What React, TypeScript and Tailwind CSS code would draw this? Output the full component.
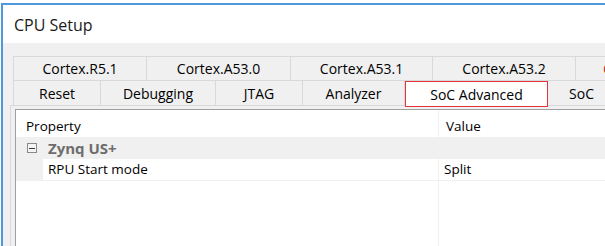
import React from 'react';

const font = { fontFamily: '"Open Sans", "Segoe UI", sans-serif' };

type Tab = { label: string; w: number; active?: boolean; accent?: boolean };

const rowOne: Tab[] = [
  { label: 'Cortex.R5.1', w: 134 },
  { label: 'Cortex.A53.0', w: 144 },
  { label: 'Cortex.A53.1', w: 142 },
  { label: 'Cortex.A53.2', w: 143 },
  { label: 'Cortex.A53.3', w: 140, accent: true },
];

const rowTwo: Tab[] = [
  { label: 'Reset', w: 88 },
  { label: 'Debugging', w: 115 },
  { label: 'JTAG', w: 87 },
  { label: 'Analyzer', w: 102 },
  { label: 'SoC Advanced', w: 143, active: true },
  { label: 'SoC', w: 68 },
];

function TabButton({ tab, first }: { tab: Tab; first: boolean }) {
  if (tab.active) {
    return (
      <div
        className="relative z-10 h-[26px] -mb-[1px] shrink-0 flex justify-center pt-[2px] bg-white border border-[#e2353b] text-[14px] text-black"
        style={{ width: tab.w }}
      >
        {tab.label}
      </div>
    );
  }
  return (
    <div
      className={`h-full shrink-0 flex items-center border-r border-[#d9d9d9] text-[14px] ${
        first ? 'border-l' : ''
      } ${tab.accent ? 'justify-start pl-[27px] text-[#9a3b22]' : 'justify-center text-black'}`}
      style={{ width: tab.w }}
    >
      {tab.label}
    </div>
  );
}

export default function App() {
  return (
    <div className="w-[605px] h-[246px] overflow-hidden bg-white pt-[3px] pl-[1px]" style={font}>
      <div className="h-full flex flex-col border-t-2 border-l-2 border-[#4f98dc]">
        {/* Title bar */}
        <div className="h-[38px] shrink-0 flex items-center pl-[11px] pt-[2px] text-[16px] text-[#1a1a1a] bg-white">
          CPU Setup
        </div>

        {/* Dialog body */}
        <div className="flex-1 bg-[#f0f0f0] pl-[7px] pt-[13px] flex flex-col">
          <div className="ml-[3px] flex h-[24px] border-t border-[#d9d9d9] whitespace-nowrap">
            {rowOne.map((t, i) => (
              <TabButton key={t.label} tab={t} first={i === 0} />
            ))}
          </div>
          <div className="ml-[3px] flex h-[25px] items-start border-t border-[#d9d9d9] whitespace-nowrap">
            {rowTwo.map((t, i) => (
              <div key={t.label} className={t.active ? 'h-[26px] shrink-0' : 'h-full shrink-0'}>
                <TabButton tab={t} first={i === 0} />
              </div>
            ))}
          </div>

          {/* Tab page */}
          <div className="flex-1 border-t border-l border-[#d9d9d9] pt-[3px] pl-[4px]">
            <div className="h-full border-t border-l border-[#a0a0a0] bg-white text-[13.5px] text-black flex flex-col">
              {/* header */}
              <div className="h-[27px] flex shrink-0">
                <div className="w-[423px] pl-[10px] pt-[6px] border-r border-[#f0f0f0]">Property</div>
                <div className="flex-1 pl-[7px] pt-[6px]">Value</div>
              </div>
              {/* category */}
              <div className="h-[22px] flex items-center bg-[#f0f0f0] shrink-0">
                <div className="w-[32px] flex justify-end pr-[11px]">
                  <div className="w-[10px] h-[10px] border border-[#8a8a8a] bg-[#f4f4f4] flex items-center justify-center">
                    <div className="w-[6px] h-[1px] bg-[#3a3a3a]" />
                  </div>
                </div>
                <span className="text-[15px] font-bold text-[#6d6d6d]">Zynq US+</span>
              </div>
              {/* property row */}
              <div className="h-[22px] flex shrink-0 border-b border-[#f0f0f0]">
                <div className="w-[27px] bg-[#f0f0f0]" />
                <div className="w-[396px] flex items-center pl-[5px] border-r border-[#f0f0f0]">RPU Start mode</div>
                <div className="flex-1 flex items-center pl-[5px]">Split</div>
              </div>
              <div className="flex-1 flex">
                <div className="w-[423px] border-r border-[#f0f0f0]" />
                <div className="flex-1" />
              </div>
            </div>
          </div>
        </div>
      </div>
    </div>
  );
}
